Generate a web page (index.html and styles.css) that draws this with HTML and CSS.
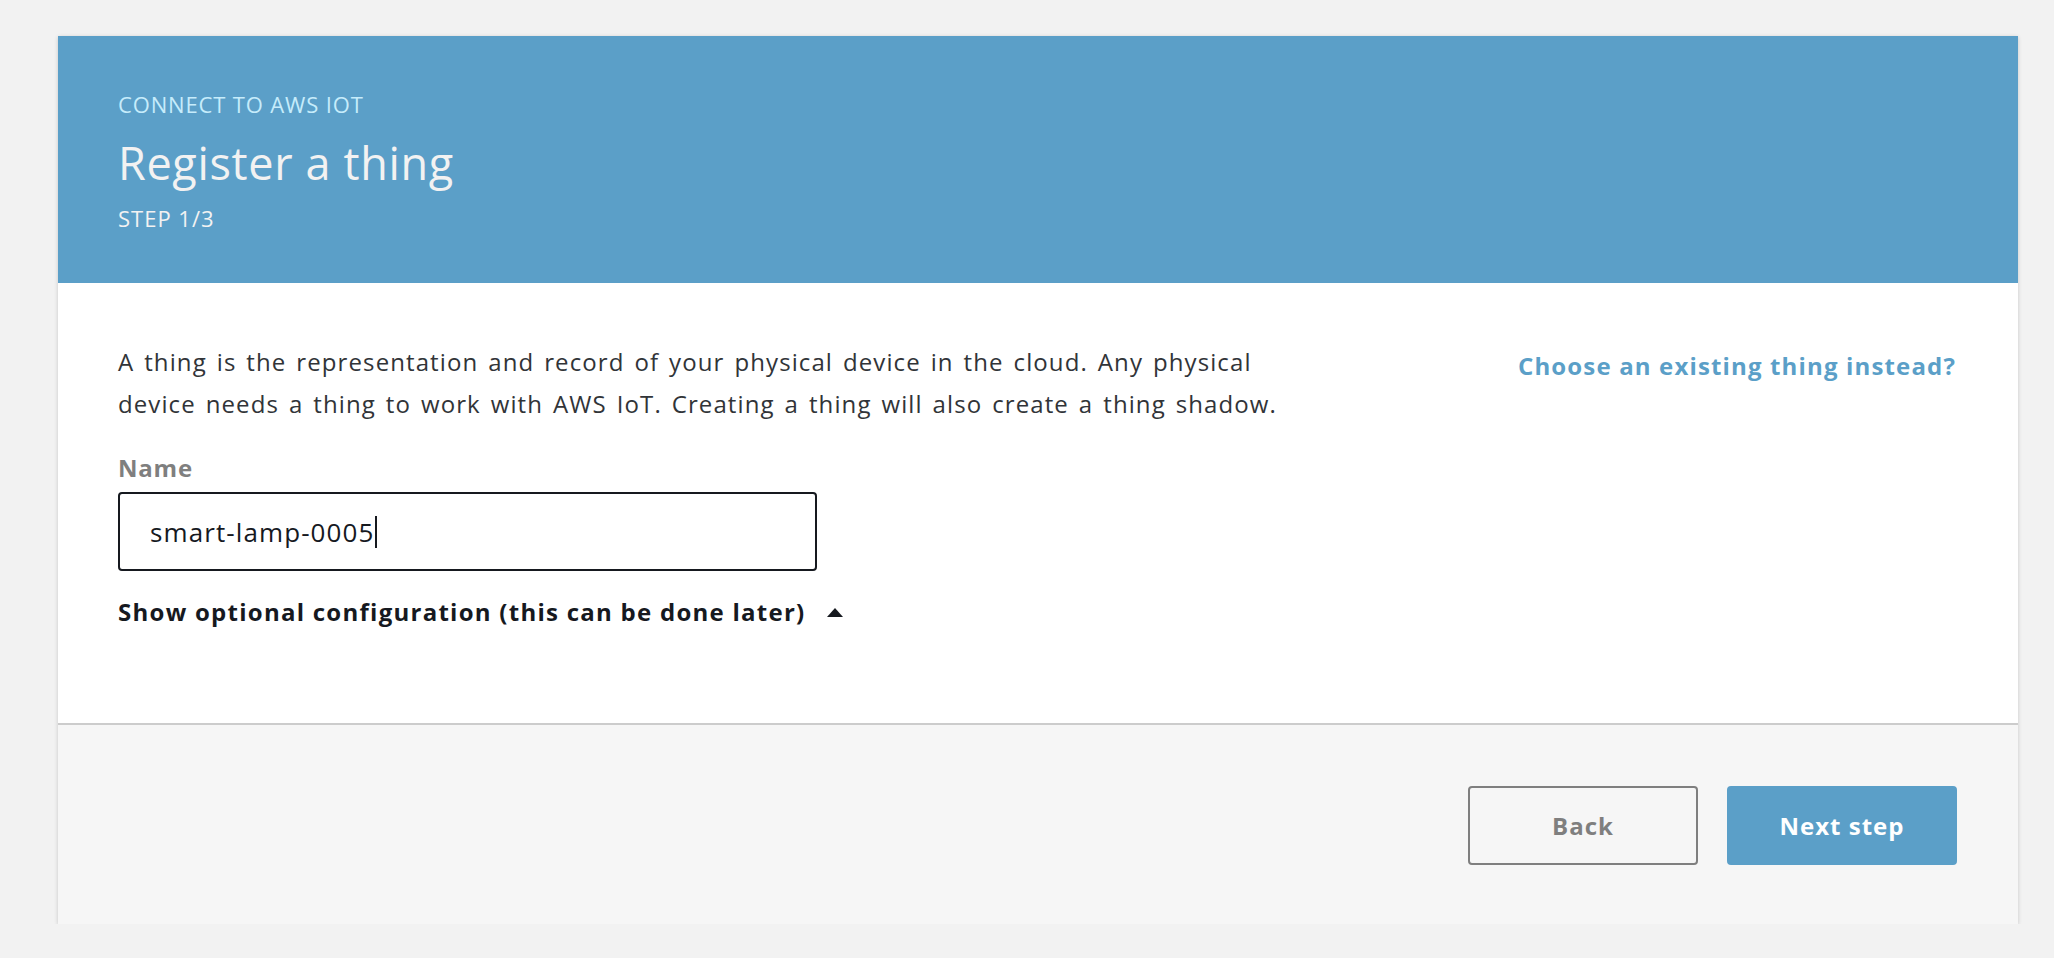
FILE: index.html
```html
<!DOCTYPE html>
<html lang="en">
<head>
<meta charset="utf-8">
<title>Register a thing</title>
<link rel="stylesheet" href="styles.css">
</head>
<body>
<div class="page">
  <div class="card">
    <div class="card-header">
      <div class="eyebrow">CONNECT TO AWS IOT</div>
      <h1 class="title">Register a thing</h1>
      <div class="step">STEP 1/3</div>
    </div>
    <div class="card-body">
      <div class="form-col">
        <p class="intro">A thing is the representation and record of your physical device in the cloud. Any physical device needs a thing to work with AWS IoT. Creating a thing will also create a thing shadow.</p>
        <div class="label">Name</div>
        <div class="input"><span class="input-text">smart-lamp-0005</span><span class="caret"></span></div>
        <div class="toggle">Show optional configuration (this can be done later)<span class="tri"></span></div>
      </div>
      <a class="alt-link">Choose an existing thing instead?</a>
    </div>
    <div class="card-footer">
      <button class="btn btn-back">Back</button>
      <button class="btn btn-next">Next step</button>
    </div>
  </div>
</div>
</body>
</html>
```
FILE: styles.css
```css
html, body {
  margin: 0;
  padding: 0;
  background: #f2f2f2;
  font-family: "Open Sans", "Noto Sans", sans-serif;
}
.page {
  padding: 36px 36px 0 58px;
}
.card {
  background: #ffffff;
  box-shadow: 0 1px 4px rgba(0, 0, 0, 0.18);
}
.card-header {
  background: #5b9fc8;
  padding: 53px 60px 47px 60px;
  height: 247px;
  box-sizing: border-box;
}
.eyebrow {
  font-size: 22px;
  line-height: 30px;
  letter-spacing: 0.85px;
  color: #c6ecfb;
}
.title {
  margin: 15px 0 0 0;
  font-size: 45px;
  line-height: 58px;
  letter-spacing: 0.65px;
  font-weight: 400;
  color: #f2f2f2;
}
.step {
  margin-top: 11px;
  font-size: 22px;
  line-height: 30px;
  letter-spacing: 1px;
  color: #f2f2f2;
}
.card-body {
  display: flex;
  justify-content: space-between;
  align-items: flex-start;
  padding: 58px 62px 96px 60px;
  height: 440px;
  box-sizing: border-box;
}
.form-col {
  display: flex;
  flex-direction: column;
  align-items: flex-start;
}
.intro {
  margin: 0;
  width: 1180px;
  font-size: 24px;
  line-height: 42px;
  letter-spacing: 1.1px;
  word-spacing: 2.6px;
  color: #313438;
}
.label {
  margin-top: 28px;
  font-size: 24px;
  line-height: 30px;
  letter-spacing: 0.8px;
  font-weight: 700;
  color: #7f7f7f;
}
.input {
  margin-top: 9px;
  width: 699px;
  height: 79px;
  box-sizing: border-box;
  border: 2px solid #16191f;
  border-radius: 4px;
  padding: 0 30px;
  display: flex;
  align-items: center;
  font-size: 26px;
  letter-spacing: 1.1px;
  color: #16191f;
}
.caret {
  display: inline-block;
  width: 2px;
  height: 32px;
  background: #16191f;
  margin-left: 0;
}
.toggle {
  margin-top: 26px;
  font-size: 24px;
  line-height: 30px;
  letter-spacing: 1.26px;
  font-weight: 700;
  color: #16191f;
  display: flex;
  align-items: center;
}
.tri {
  display: inline-block;
  width: 0;
  height: 0;
  margin-left: 21px;
  border-left: 8px solid transparent;
  border-right: 8px solid transparent;
  border-bottom: 9px solid #16191f;
}
.alt-link {
  margin-top: 4px;
  font-size: 24px;
  line-height: 42px;
  letter-spacing: 1.15px;
  font-weight: 700;
  color: #5b9fc8;
  white-space: nowrap;
  cursor: pointer;
}
.card-footer {
  border-top: 2px solid #cccccc;
  background: #f6f6f6;
  height: 201px;
  box-sizing: border-box;
  padding: 61px 61px 0 0;
  display: flex;
  justify-content: flex-end;
  align-items: flex-start;
  gap: 29px;
}
.btn {
  width: 230px;
  height: 79px;
  border-radius: 4px;
  font-family: inherit;
  font-size: 24px;
  letter-spacing: 1px;
  font-weight: 700;
  cursor: pointer;
}
.btn-back {
  background: #f6f6f6;
  border: 2px solid #7f7f7f;
  color: #7f7f7f;
}
.btn-next {
  background: #5b9fc8;
  border: 2px solid #5b9fc8;
  color: #ffffff;
}
```
